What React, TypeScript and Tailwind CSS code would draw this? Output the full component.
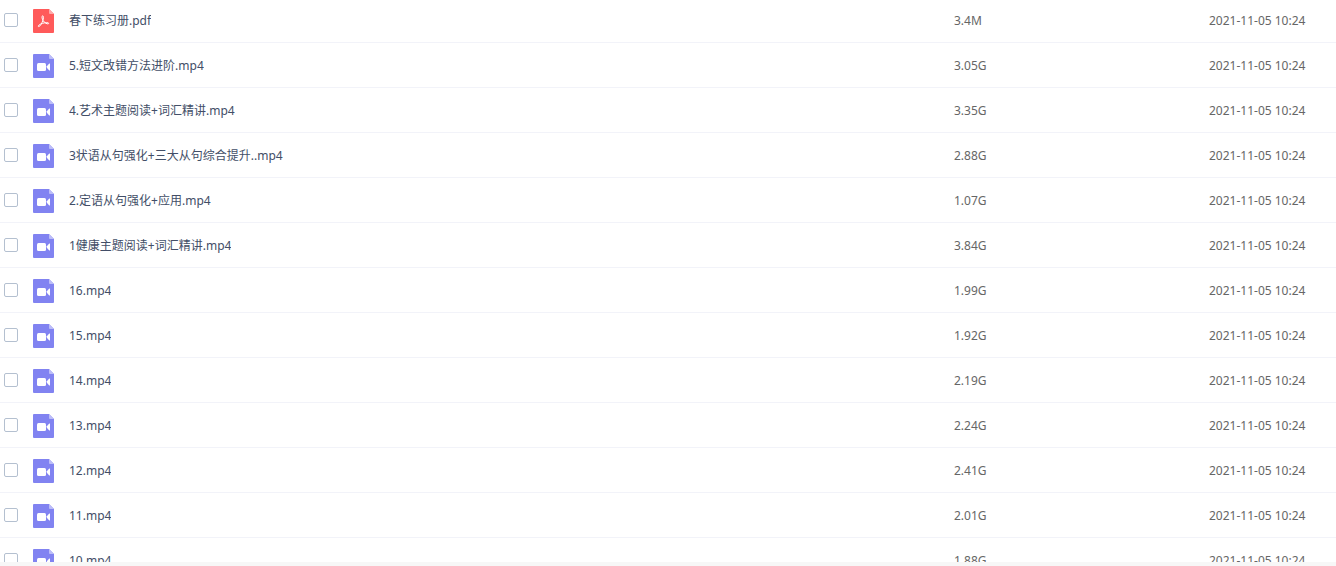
import { FC } from 'react'

type FileKind = 'pdf' | 'video'

interface FileItem {
  name: string
  size: string
  date: string
  kind: FileKind
}

const files: FileItem[] = [
  { name: '春下练习册.pdf', size: '3.4M', date: '2021-11-05 10:24', kind: 'pdf' },
  { name: '5.短文改错方法进阶.mp4', size: '3.05G', date: '2021-11-05 10:24', kind: 'video' },
  { name: '4.艺术主题阅读+词汇精讲.mp4', size: '3.35G', date: '2021-11-05 10:24', kind: 'video' },
  { name: '3状语从句强化+三大从句综合提升..mp4', size: '2.88G', date: '2021-11-05 10:24', kind: 'video' },
  { name: '2.定语从句强化+应用.mp4', size: '1.07G', date: '2021-11-05 10:24', kind: 'video' },
  { name: '1健康主题阅读+词汇精讲.mp4', size: '3.84G', date: '2021-11-05 10:24', kind: 'video' },
  { name: '16.mp4', size: '1.99G', date: '2021-11-05 10:24', kind: 'video' },
  { name: '15.mp4', size: '1.92G', date: '2021-11-05 10:24', kind: 'video' },
  { name: '14.mp4', size: '2.19G', date: '2021-11-05 10:24', kind: 'video' },
  { name: '13.mp4', size: '2.24G', date: '2021-11-05 10:24', kind: 'video' },
  { name: '12.mp4', size: '2.41G', date: '2021-11-05 10:24', kind: 'video' },
  { name: '11.mp4', size: '2.01G', date: '2021-11-05 10:24', kind: 'video' },
  { name: '10.mp4', size: '1.88G', date: '2021-11-05 10:24', kind: 'video' }
]

const PdfIcon: FC = () => (
  <svg viewBox="0 0 21 24" className="h-6 w-[21px] shrink-0" aria-hidden="true">
    <path d="M1 0H16l5 5v18a1 1 0 0 1-1 1H1a1 1 0 0 1-1-1V1a1 1 0 0 1 1-1Z" fill="#ff5a5a" />
    <path d="M16 0l5 5h-4a1 1 0 0 1-1-1Z" fill="#ffa9a9" />
    <path
      d="M9.6 6.8c1.2-.1 1 2.4.2 4.8-.9 2.700-2.600 5.700-4 6-1.200 0-.4-1.700 2.100-2.700 2.300-.9 5.200-1.500 7-1.200 1.500.4.700 1.600-.8 1.100-2-.7-4-2.500-4.700-4.600-.5-1.500-.6-3.300.2-3.400Z"
      fill="none"
      stroke="#fff"
      strokeWidth="1"
      strokeLinejoin="round"
    />
  </svg>
)

const VideoIcon: FC = () => (
  <svg viewBox="0 0 21 24" className="h-6 w-[21px] shrink-0" aria-hidden="true">
    <path d="M1 0H16l5 5v18a1 1 0 0 1-1 1H1a1 1 0 0 1-1-1V1a1 1 0 0 1 1-1Z" fill="#8183f1" />
    <path d="M16 0l5 5h-4a1 1 0 0 1-1-1Z" fill="#bcbdf8" />
    <rect x="4" y="9" width="9" height="8" rx="1.5" fill="#fff" />
    <path d="M13.8 12.2 16.3 9.600q.7-.5.7.4v6q0 .9-.7.4l-2.500-2.600Z" fill="#fff" />
  </svg>
)

const FileRow: FC<{ file: FileItem; id: string }> = ({ file, id }) => (
  <tr className="h-[45px] *:border-b *:border-[#f2f3f9]">
    <td className="pl-1">
      <input
        id={id}
        type="checkbox"
        className="block size-3.5 appearance-none rounded-xs border border-[#b4c0d0] bg-white checked:border-[#8183f1] checked:bg-[#8183f1]"
      />
    </td>
    <td>
      <div className="flex items-center gap-[15px] pt-0.5">
        {file.kind === 'pdf' ? <PdfIcon /> : <VideoIcon />}
        <label htmlFor={id} className="truncate text-[#424e67]">
          {file.name}
        </label>
      </div>
    </td>
    <td className="pl-px pt-0.5">{file.size}</td>
    <td className="pl-px pt-0.5">{file.date}</td>
  </tr>
)

const App: FC = () => {
  return (
    <div className="flex h-screen flex-col bg-white font-['Noto_Sans','Noto_Sans_CJK_SC',sans-serif] text-xs text-[#666]">
      <main className="min-h-0 flex-1 overflow-hidden">
        <table className="-mt-0.5 w-full table-fixed border-separate border-spacing-0">
          <colgroup>
            <col className="w-[33px]" />
            <col />
            <col className="w-[255px]" />
            <col className="w-32" />
          </colgroup>
          <tbody>
            {files.map((file, index) => (
              <FileRow key={file.name} file={file} id={`file-${index}`} />
            ))}
          </tbody>
        </table>
      </main>
      <footer className="h-1 shrink-0 bg-[#f7f7f7]" />
    </div>
  )
}

export default App
